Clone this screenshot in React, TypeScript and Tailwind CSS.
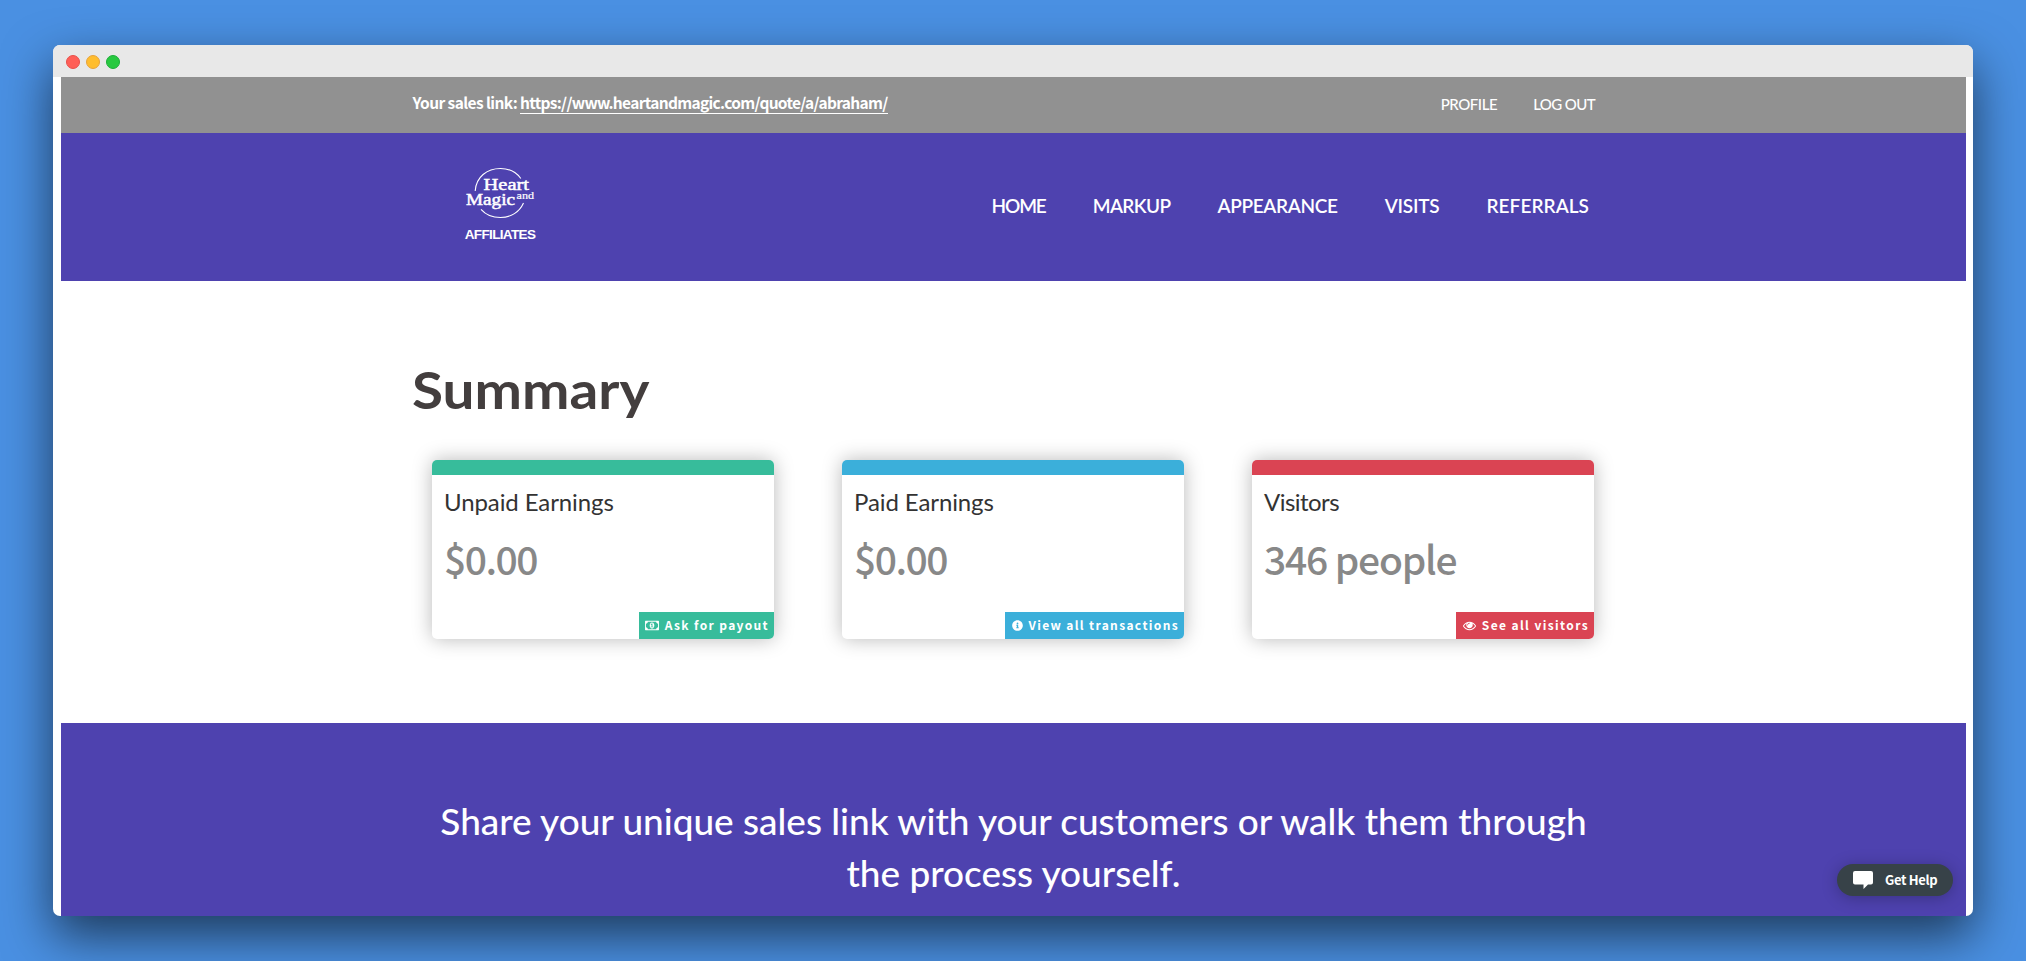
import type { ReactNode } from "react";
import { FaInfoCircle } from "react-icons/fa";

const navItems = [
  { label: "HOME", className: "tracking-[-1.1px]" },
  { label: "MARKUP", className: "tracking-[-0.6px]" },
  { label: "APPEARANCE", className: "tracking-[-0.33px]" },
  { label: "VISITS", className: "tracking-[-0.2px]" },
  { label: "REFERRALS", className: "tracking-[0.05px]" },
];

function MoneyIcon() {
  return (
    <svg viewBox="0 0 1920 1792" className="h-[13px] w-[14px] fill-current">
      <path d="M768 1152h384v-96h-128v-448h-114l-148 137 77 80q42-37 55-57h2v288h-128v96zm512-256q0 70-21 142t-59.5 134-101.5 101-138 39-138-39-101.5-101-59.5-134-21-142 21-142 59.5-134 101.5-101 138-39 138 39 101.5 101 59.5 134 21 142zm512 256v-512q-106 0-181-75t-75-181h-1152q0 106-75 181t-181 75v512q106 0 181 75t75 181h1152q0-106 75-181t181-75zm128-832v1152q0 26-19 45t-45 19h-1792q-26 0-45-19t-19-45v-1152q0-26 19-45t45-19h1792q26 0 45 19t19 45z" />
    </svg>
  );
}

function EyeIcon() {
  return (
    <svg viewBox="0 0 1792 1792" className="ml-px size-[13px] fill-current">
      <path d="M1664 960q-152-236-381-353 61 104 61 225 0 185-131.5 316.5t-316.5 131.5-316.5-131.5-131.5-316.5q0-121 61-225-229 117-381 353 133 205 333.5 326.5t434.5 121.5 434.5-121.5 333.5-326.5zm-720-384q0-20-14-34t-34-14q-125 0-214.5 89.5t-89.5 214.5q0 20 14 34t34 14 34-14 14-34q0-86 61-147t147-61q20 0 34-14t14-34zm848 384q0 34-20 69-140 230-376.5 368.5t-499.5 138.5-499.5-139-376.5-368q-20-35-20-69t20-69q140-229 376.5-368t499.5-139 499.5 139 376.5 368q20 35 20 69z" />
    </svg>
  );
}

function Logo() {
  return (
    <div className="flex w-[76px] flex-col items-center text-white">
      <svg viewBox="0 0 76 56" className="h-[56px] w-[76px] fill-white font-['Liberation_Serif',serif]">
        <g fill="none" stroke="#fff" strokeWidth="1.1">
          <path d="M13.2 26C14 12 25 3.5 38.5 3.5C47 3.5 54.5 7.5 58.8 13.5" />
          <path d="M19 44.3C24 50 31 52.5 38.5 52.5C49 52.5 57.5 47 61.5 38" />
        </g>
        <g stroke="#fff" strokeWidth="0.5">
          <text x="21.5" y="25" fontSize="17.5" textLength="45.5" lengthAdjust="spacingAndGlyphs">
            Heart
          </text>
          <text x="4" y="40" fontSize="17.5" textLength="49" lengthAdjust="spacingAndGlyphs">
            Magic
          </text>
          <text x="54.5" y="34" fontSize="10.5" strokeWidth="0.2" textLength="17.5" lengthAdjust="spacingAndGlyphs">
            and
          </text>
        </g>
      </svg>
      <span className="mt-[6px] font-['Liberation_Sans',sans-serif] text-[13.5px] leading-[16px] font-bold tracking-[-0.65px]">
        AFFILIATES
      </span>
    </div>
  );
}

type CardProps = {
  title: string;
  titleClass: string;
  value: string;
  valueClass: string;
  color: string;
  icon: ReactNode;
  action: string;
  actionClass: string;
};

function SummaryCard({ title, titleClass, value, valueClass, color, icon, action, actionClass }: CardProps) {
  return (
    <div className="flex h-[179px] w-[342px] flex-col overflow-hidden rounded-[5px] bg-white shadow-[0_0_20px_rgba(0,0,0,0.28)]">
      <div className={`h-[15px] shrink-0 ${color}`} />
      <div className="flex-1 px-[12px] pt-[9px]">
        <h3 className={`font-['Lato',sans-serif] text-[24px] leading-[36px] text-[#333] ${titleClass}`}>{title}</h3>
        <p
          className={`mt-[8px] font-['Noto_Sans_CJK_SC',sans-serif] text-[39px] leading-[60px] font-medium text-[#888] ${valueClass}`}
        >
          {value}
        </p>
      </div>
      <a
        className={`flex h-[27px] shrink-0 items-center justify-between self-end pr-[5px] pl-[6px] font-['Noto_Sans_CJK_SC',sans-serif] text-[12px] leading-[18px] font-bold whitespace-nowrap text-white ${color} ${actionClass}`}
      >
        {icon}
        <span className="pb-px">{action}</span>
      </a>
    </div>
  );
}

export default function App() {
  return (
    <div className="h-[961px] w-[2026px] overflow-hidden bg-[#4a90e2] pt-[45px] pl-[53px]">
      <div className="relative flex h-[871px] w-[1920px] flex-col overflow-hidden rounded-[7px] bg-white shadow-[0_20px_50px_rgba(0,0,0,0.6)]">
        <div className="flex h-8 shrink-0 items-center gap-[6px] bg-[#e8e8e8] pt-[2px] pl-[13px]">
          <span className="size-[14px] rounded-full border border-[#e8504a] bg-[#ff5f57]" />
          <span className="size-[14px] rounded-full border border-[#e8a33a] bg-[#ffbd2e]" />
          <span className="size-[14px] rounded-full border border-[#1dae38] bg-[#28c940]" />
        </div>

        <div className="mr-[7px] ml-[8px] flex flex-1 flex-col">
          <div className="flex h-[56px] justify-between bg-[#919191] pr-[371px] pl-[351.5px] text-white">
            <p className="pt-[14px] font-['Noto_Sans_CJK_SC',sans-serif] text-[15.5px] leading-[22px] font-bold whitespace-nowrap">
              <span className="inline-block w-[107.5px] tracking-[-0.58px]">Your sales link:</span>
              <a className="inline-block border-b border-white tracking-[-0.69px]">
                https://www.heartandmagic.com/quote/a/abraham/
              </a>
            </p>
            <div className="flex gap-[36px] pt-[16px] font-['Lato',sans-serif] text-[15px] leading-[22px] font-medium">
              <a className="tracking-[-0.45px]">PROFILE</a>
              <a className="tracking-[-0.6px]">LOG OUT</a>
            </div>
          </div>

          <header className="flex h-[148px] justify-between bg-[#4e42af] pr-[377px] pl-[401px]">
            <div className="pt-[32px]">
              <Logo />
            </div>
            <nav className="flex gap-[47px] pt-[59px] font-['Lato',sans-serif] text-[19px] leading-[28px] font-semibold text-white">
              {navItems.map((item) => (
                <a key={item.label} className={item.className}>
                  {item.label}
                </a>
              ))}
            </nav>
          </header>

          <main className="h-[442px] pt-[73px] pl-[351px]">
            <h1 className="w-fit origin-left scale-x-[1.09] font-['Lato',sans-serif] text-[52px] leading-[70px] font-bold text-[#433e3e]">
              Summary
            </h1>
            <div className="mt-[36px] flex gap-[68px] pl-[20px]">
              <SummaryCard
                title="Unpaid Earnings"
                titleClass="tracking-[-0.1px]"
                value="$0.00"
                valueClass="tracking-[-1.5px]"
                color="bg-[#37bc9b]"
                icon={<MoneyIcon />}
                action="Ask for payout"
                actionClass="w-[135px] tracking-[1.35px]"
              />
              <SummaryCard
                title="Paid Earnings"
                titleClass="tracking-[-0.1px]"
                value="$0.00"
                valueClass="tracking-[-1.5px]"
                color="bg-[#3bafda]"
                icon={<FaInfoCircle className="ml-px size-[11px]" />}
                action="View all transactions"
                actionClass="w-[179px] tracking-[1.35px]"
              />
              <SummaryCard
                title="Visitors"
                titleClass="tracking-[-0.55px]"
                value="346 people"
                valueClass="tracking-[-1.2px]"
                color="bg-[#da4453]"
                icon={<EyeIcon />}
                action="See all visitors"
                actionClass="w-[138px] tracking-[1.38px]"
              />
            </div>
          </main>

          <section className="flex-1 bg-[#4e42af] pt-[72px] text-center font-['Lato',sans-serif] text-[36px] leading-[52px] font-medium text-white">
            <p className="scale-x-[1.026]">
              Share your unique sales link with your customers or walk them through
              <br />
              the process yourself.
            </p>
          </section>
        </div>

        <button className="absolute right-[20px] bottom-[20px] flex h-8 w-[116px] items-center rounded-full bg-[#374248] pl-[16px] font-['Noto_Sans_CJK_SC',sans-serif] text-[13px] leading-[20px] font-bold tracking-[-0.35px] whitespace-nowrap text-white shadow-[0_2px_16px_rgba(0,0,0,0.25)]">
          <svg viewBox="0 0 20 18" className="h-[18px] w-[20px] fill-white">
            <path d="M2 0h16a2 2 0 0 1 2 2v9.5a2 2 0 0 1-2 2h-3L10.5 18v-4.5H2a2 2 0 0 1-2-2V2a2 2 0 0 1 2-2z" />
          </svg>
          <span className="ml-[12px]">Get Help</span>
        </button>
      </div>
    </div>
  );
}
